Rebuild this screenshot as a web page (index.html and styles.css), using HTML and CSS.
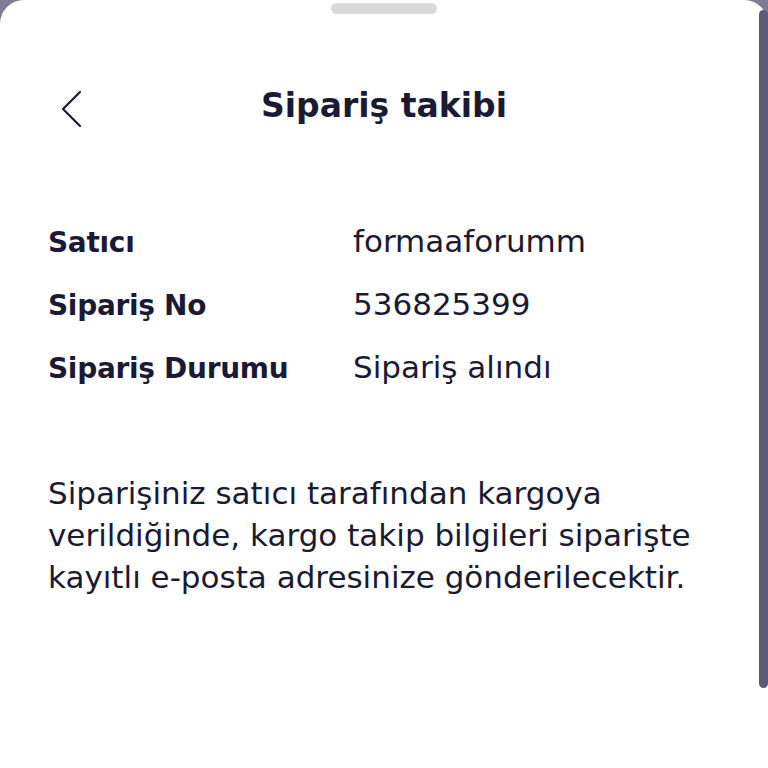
FILE: index.html
```html
<!DOCTYPE html>
<html lang="tr">
<head>
<meta charset="utf-8">
<title>Sipariş takibi</title>
<link rel="stylesheet" href="styles.css">
</head>
<body>
<div class="sheet">
  <div class="handle"></div>
  <header class="topbar">
    <button class="back" aria-label="Geri">
      <svg width="24" height="40" viewBox="0 0 24 40"><path d="M20 3 L3 20 L20 37" fill="none" stroke="#1a1a30" stroke-width="2.2" stroke-linecap="round" stroke-linejoin="round"/></svg>
    </button>
    <h1 class="title">Sipariş takibi</h1>
    <span class="spacer"></span>
  </header>
  <dl class="info">
    <div class="row"><dt>Satıcı</dt><dd>formaaforumm</dd></div>
    <div class="row"><dt>Sipariş No</dt><dd>536825399</dd></div>
    <div class="row"><dt>Sipariş Durumu</dt><dd>Sipariş alındı</dd></div>
  </dl>
  <p class="note">Siparişiniz satıcı tarafından kargoya<br>verildiğinde, kargo takip bilgileri siparişte<br>kayıtlı e-posta adresinize gönderilecektir.</p>
  <div class="scrollbar"></div>
</div>
</body>
</html>
```
FILE: styles.css
```css
html, body {
  margin: 0;
  padding: 0;
  background: #7d7c92;
}
body {
  width: 768px;
  height: 768px;
  overflow: hidden;
  font-family: "DejaVu Sans", "Noto Sans", sans-serif;
  color: #1b1a33;
}
.sheet {
  position: relative;
  width: 768px;
  height: 768px;
  background: #fff;
  border-radius: 24px 24px 0 0;
  box-sizing: border-box;
  padding: 3px 48px 0;
}
.handle {
  width: 106px;
  height: 11px;
  margin: 0 auto;
  border-radius: 6px;
  background: #d9d9d9;
}
.topbar {
  display: flex;
  align-items: center;
  margin-top: 71px;
  height: 40px;
}
.back {
  width: 40px;
  height: 48px;
  padding: 8px 0 0 12px;
  margin: 0;
  border: 0;
  background: none;
  display: flex;
  align-items: center;
}
.title {
  flex: 1;
  margin: 0;
  text-align: center;
  font-size: 33px;
  font-weight: 700;
}
.spacer { width: 40px; }
.info {
  margin: 98px 0 0;
}
.row {
  display: flex;
  align-items: baseline;
  height: 63px;
}
dt {
  width: 305px;
  font-weight: 700;
  font-size: 28px;
  letter-spacing: -0.3px;
}
dd {
  margin: 0;
  font-size: 31px;
  font-weight: 400;
}
.note {
  margin: 60px 0 0;
  font-size: 31px;
  line-height: 42px;
  white-space: nowrap;
}
.scrollbar {
  position: absolute;
  right: 0;
  top: 10px;
  width: 9px;
  height: 678px;
  border-radius: 5px;
  background: #5c5a7a;
}
```
